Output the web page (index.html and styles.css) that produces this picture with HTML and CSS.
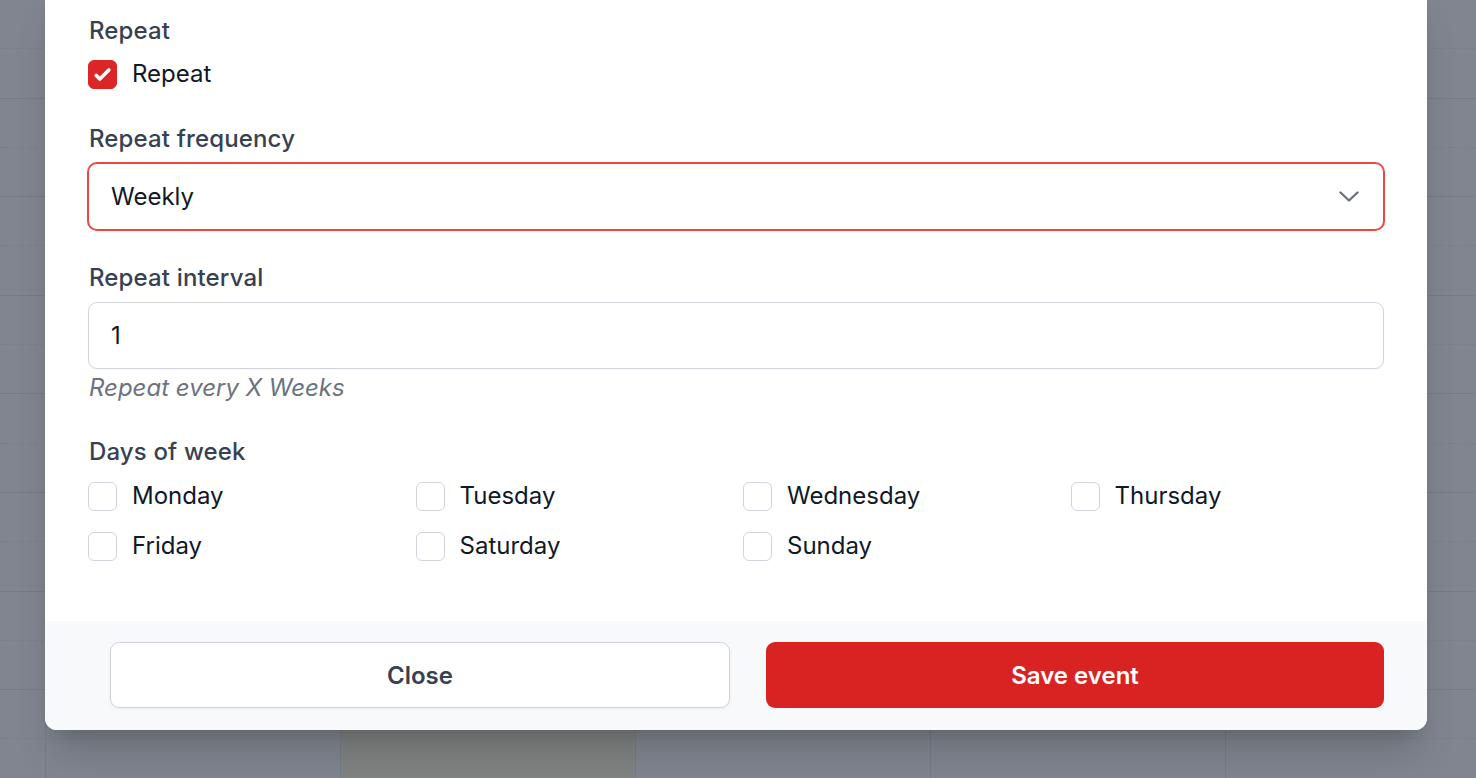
FILE: index.html
```html
<!DOCTYPE html>
<html lang="en">
<head>
<meta charset="utf-8">
<title>Event</title>
<link rel="stylesheet" href="styles.css">
</head>
<body>
<div class="calendar">
  <div class="rows">
    <div class="hour"><div class="half"></div></div>
    <div class="hour"><div class="half"></div></div>
    <div class="hour"><div class="half"></div></div>
    <div class="hour"><div class="half"></div></div>
    <div class="hour"><div class="half"></div></div>
    <div class="hour"><div class="half"></div></div>
    <div class="hour"><div class="half"></div></div>
    <div class="hour"><div class="half"></div></div>
  </div>
  <div class="cols">
    <div class="gutter"></div>
    <div class="day"></div>
    <div class="day today"></div>
    <div class="day"></div>
    <div class="day"></div>
    <div class="day"></div>
  </div>
</div>

<div class="modal">
  <div class="modal-body">
    <div class="field">
      <div class="label">Repeat</div>
      <label class="check-row first-check">
        <span class="box checked">
          <svg viewBox="0 0 16 16" width="29" height="29"><path fill="#fff" d="M12.207 4.793a1 1 0 010 1.414l-5 5a1 1 0 01-1.414 0l-2-2a1 1 0 011.414-1.414L6.5 9.086l4.293-4.293a1 1 0 011.414 0z"/></svg>
        </span>
        <span class="check-text">Repeat</span>
      </label>
    </div>

    <div class="field f2">
      <div class="label">Repeat frequency</div>
      <div class="select">
        <span class="value">Weekly</span>
        <svg class="chev" viewBox="0 0 20 11" width="20" height="11"><path d="M1.5 1.5l8.5 8 8.5-8" fill="none" stroke="#6b7280" stroke-width="2.4" stroke-linecap="round" stroke-linejoin="round"/></svg>
      </div>
    </div>

    <div class="field f3">
      <div class="label">Repeat interval</div>
      <div class="input"><span class="value">1</span></div>
      <div class="help">Repeat every X Weeks</div>
    </div>

    <div class="field f4">
      <div class="label">Days of week</div>
      <div class="days">
        <label class="check-row"><span class="box"></span><span class="check-text">Monday</span></label>
        <label class="check-row"><span class="box"></span><span class="check-text">Tuesday</span></label>
        <label class="check-row"><span class="box"></span><span class="check-text">Wednesday</span></label>
        <label class="check-row"><span class="box"></span><span class="check-text">Thursday</span></label>
        <label class="check-row"><span class="box"></span><span class="check-text">Friday</span></label>
        <label class="check-row"><span class="box"></span><span class="check-text">Saturday</span></label>
        <label class="check-row"><span class="box"></span><span class="check-text">Sunday</span></label>
      </div>
    </div>
  </div>
  <div class="modal-footer">
    <button class="btn btn-close">Close</button>
    <button class="btn btn-save">Save event</button>
  </div>
</div>
</body>
</html>
```

FILE: styles.css
```css
* { box-sizing: border-box; }
html, body {
  margin: 0;
  padding: 0;
  width: 1476px;
  height: 778px;
  overflow: hidden;
}
body {
  font-family: Inter, "Noto Sans", "Liberation Sans", sans-serif;
  background: #80858f;
  position: relative;
}

/* background calendar under overlay */
.calendar {
  position: absolute;
  inset: 0;
}
.rows {
  position: absolute;
  inset: 0;
  display: flex;
  flex-direction: column;
}
.hour {
  flex: none;
  height: 98.6px;
  border-bottom: 1px solid #777b86;
}
.half {
  height: 49.3px;
  border-bottom: 1px dashed #7a7e89;
}
.cols {
  position: absolute;
  inset: 0;
  display: flex;
}
.gutter {
  flex: none;
  width: 45px;
}
.day {
  flex: none;
  width: 295px;
  border-left: 1px solid #777b86;
}
.day.today {
  background: rgba(128, 128, 110, 0.35);
}

/* modal */
.modal {
  position: absolute;
  left: 45px;
  right: 49px;
  top: -15px;
  bottom: 48px;
  background: #fff;
  border-radius: 12px;
  overflow: hidden;
  display: flex;
  flex-direction: column;
  box-shadow: 0 30px 38px -8px rgba(0,0,0,0.16), 0 12px 15px -9px rgba(0,0,0,0.12);
}
.modal-body {
  flex: 1;
  padding: 30px 43px 0 43px;
}
.label {
  font-size: 24px;
  line-height: 32px;
  font-weight: 500;
  color: #374151;
  padding-left: 1px;
  letter-spacing: 0.15px;
}
.check-row {
  display: flex;
  align-items: center;
  gap: 14px;
  height: 30px;
}
.first-check { margin-top: 12px; }
.box {
  flex: none;
  width: 29px;
  height: 29px;
  border: 1px solid #d1d5db;
  border-radius: 6px;
  background: #fff;
  display: flex;
  align-items: center;
  justify-content: center;
}
.box.checked {
  background: #dc2626;
  border-color: #dc2626;
}
.box.checked svg { display: block; flex: none; }
.check-text {
  font-size: 24px;
  line-height: 30px;
  color: #111827;
  padding-left: 1px;
}

.f2 { margin-top: 34px; }
.select, .input {
  margin-top: 8px;
  height: 67px;
  border: 1px solid #d1d5db;
  border-radius: 9px;
  display: flex;
  align-items: center;
  justify-content: space-between;
  padding: 0 24px 0 22px;
  background: #fff;
  box-shadow: 0 1px 2px rgba(0,0,0,0.04);
}
.select {
  border-color: #ef4444;
  box-shadow: 0 0 0 1px #ef4444;
}
.value {
  font-size: 24px;
  color: #111827;
}
.chev { display: block; flex: none; }

.f3 { margin-top: 32px; }
.help {
  margin-top: 3px;
  font-size: 24px;
  line-height: 32px;
  font-style: italic;
  color: #6b7280;
  padding-left: 1px;
}
.f4 { margin-top: 32px; }
.days {
  margin-top: 13px;
  display: grid;
  grid-template-columns: repeat(4, 1fr);
  column-gap: 14px;
  row-gap: 20px;
}

.modal-footer {
  flex: none;
  height: 109px;
  background: #f8f9fb;
  display: flex;
  gap: 36px;
  padding: 21px 43px 22px 65px;
}
.btn {
  flex: 1;
  height: 66px;
  border-radius: 9px;
  font-family: inherit;
  font-size: 24px;
  font-weight: 600;
  cursor: pointer;
}
.btn-close {
  background: #fff;
  border: 1px solid #d1d5db;
  color: #374151;
  box-shadow: 0 1px 3px rgba(0,0,0,0.06);
}
.btn-save {
  background: #d92323;
  border: none;
  color: #fff;
}
```
